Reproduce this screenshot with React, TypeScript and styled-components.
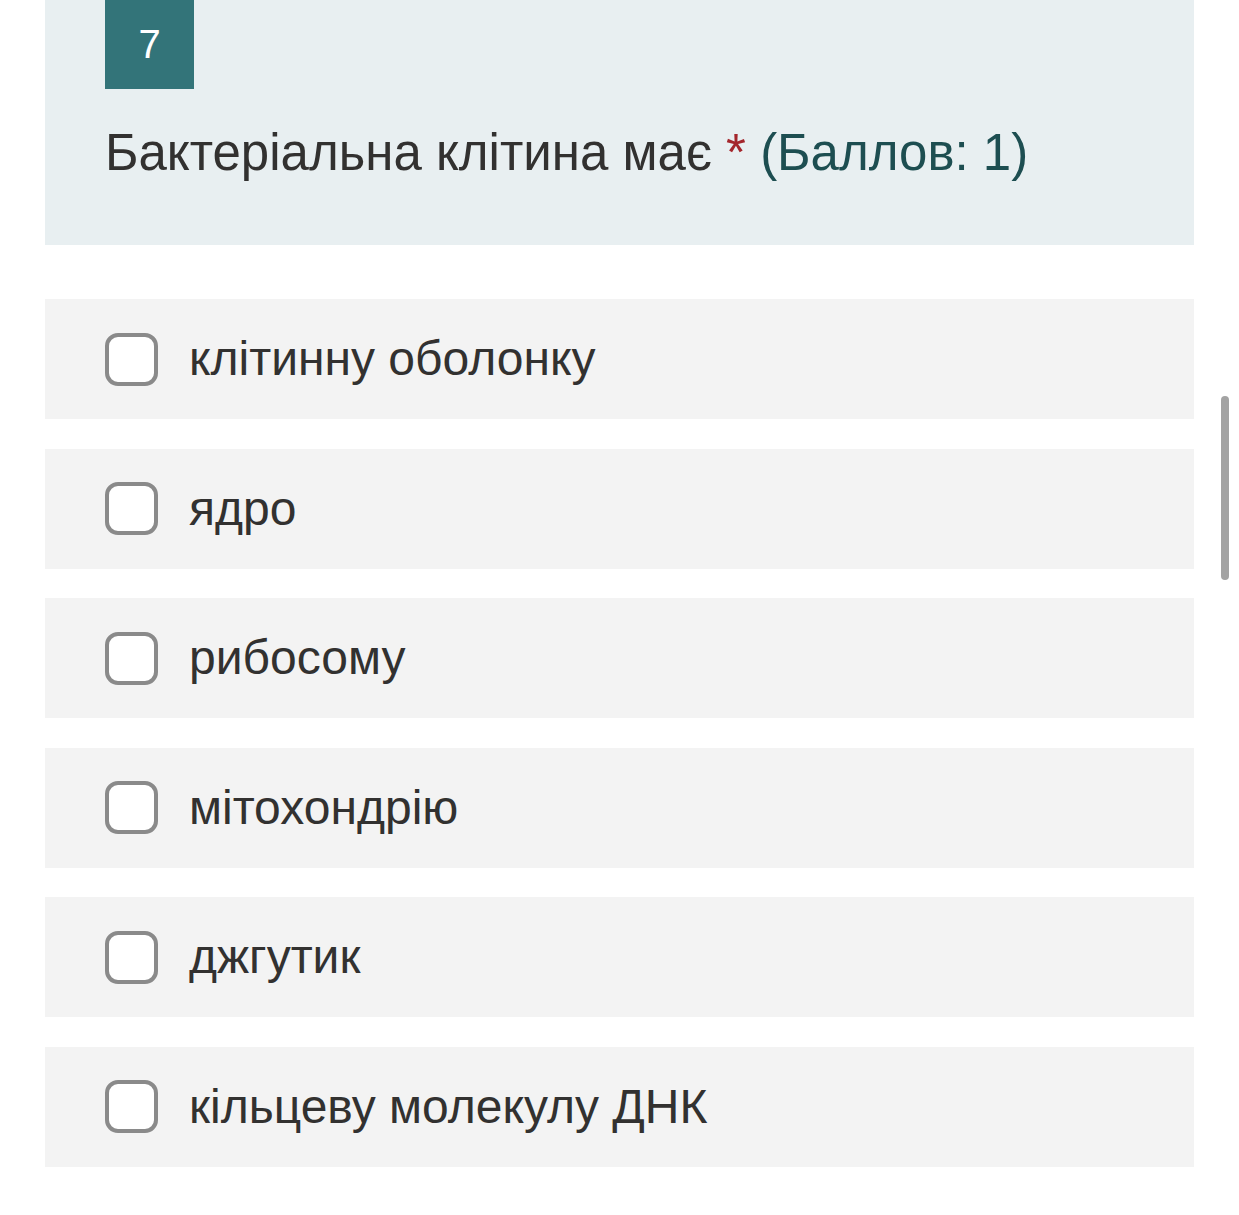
import React from "react";
import styled, { createGlobalStyle } from "styled-components";

const Global = createGlobalStyle`
  html, body { margin: 0; padding: 0; background: #ffffff; }
  body { font-family: "Liberation Sans", Arial, sans-serif; }
`;

const Page = styled.div`
  width: 1239px;
  height: 1215px;
  position: relative;
  overflow: hidden;
  background: #ffffff;
`;

const Column = styled.div`
  margin-left: 45px;
  width: 1149px;
  display: flex;
  flex-direction: column;
`;

const Header = styled.div`
  background: #e8eff1;
  height: 245px;
  padding: 0 60px;
  box-sizing: border-box;
  display: flex;
  flex-direction: column;
  align-items: flex-start;
`;

const NumberBox = styled.div`
  width: 89px;
  height: 89px;
  background: #337479;
  color: #ffffff;
  font-size: 40px;
  display: flex;
  align-items: center;
  justify-content: center;
`;

const Title = styled.div`
  margin-top: 28px;
  font-size: 51px;
  line-height: 72px;
  color: #323130;
`;

const Star = styled.span`
  color: #a4262c;
`;

const Points = styled.span`
  color: #1d4e51;
`;

const Options = styled.div`
  margin-top: 54px;
  display: flex;
  flex-direction: column;
  gap: 29.6px;
`;

const Option = styled.label`
  height: 120px;
  background: #f3f3f3;
  display: flex;
  align-items: center;
  padding-left: 60px;
  box-sizing: border-box;
  gap: 31px;
`;

const Box = styled.span`
  width: 53px;
  height: 53px;
  box-sizing: border-box;
  border: 4px solid #8a8a8a;
  border-radius: 13px;
  background: #ffffff;
  flex: none;
`;

const OptionText = styled.span`
  font-size: 48px;
  color: #323130;
  line-height: 60px;
`;

const Scrollbar = styled.div`
  position: absolute;
  left: 1221px;
  top: 396px;
  width: 8px;
  height: 184px;
  border-radius: 4px;
  background: #a3a3a3;
`;

const options = [
  "клітинну оболонку",
  "ядро",
  "рибосому",
  "мітохондрію",
  "джгутик",
  "кільцеву молекулу ДНК",
];

export default function App() {
  return (
    <Page>
      <Global />
      <Column>
        <Header>
          <NumberBox>7</NumberBox>
          <Title>
            Бактеріальна клітина має <Star>*</Star> <Points>(Баллов: 1)</Points>
          </Title>
        </Header>
        <Options>
          {options.map((o) => (
            <Option key={o}>
              <Box />
              <OptionText>{o}</OptionText>
            </Option>
          ))}
        </Options>
      </Column>
      <Scrollbar />
    </Page>
  );
}
